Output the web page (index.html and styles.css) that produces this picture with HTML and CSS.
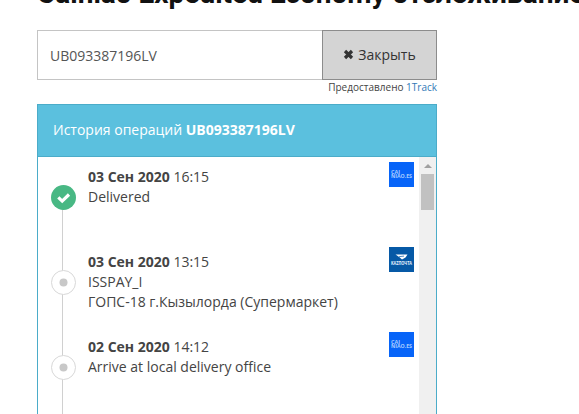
FILE: index.html
```html
<!DOCTYPE html>
<html lang="ru">
<head>
    <meta charset="UTF-8">
    <meta name="viewport" content="width=device-width, initial-scale=1.0">
    <title>Cainiao Expedited Economy отслеживание</title>
    <link rel="stylesheet" href="styles.css">
</head>
<body>
    <h1 class="title">Cainiao Expedited Economy отслеживание</h1>
    <div class="tracker">
        <div class="search">
            <input class="track-input" type="text" value="UB093387196LV">
            <button class="close-btn">
                <svg class="close-icon" width="11" height="11" viewBox="0 0 11 11">
                    <path d="M2 2l7 7M9 2l-7 7" stroke="#333" stroke-width="3.2"/>
                </svg>
                <span>Закрыть</span>
            </button>
        </div>
        <div class="provided">Предоставлено <a href="#">1Track</a></div>

        <div class="panel">
            <div class="panel-heading">История операций <b>UB093387196LV</b></div>
            <div class="panel-body">
                <ul class="timeline">
                    <li class="event">
                        <div class="rail rail-first">
                            <svg class="marker" width="27" height="27" viewBox="0 0 27 27">
                                <circle cx="13.5" cy="13.5" r="12.5" fill="#48b884"/>
                                <path d="M8.3 13.4l3.9 3.7 6.8-6.6" fill="none" stroke="#fff" stroke-width="3.2"/>
                            </svg>
                        </div>
                        <div class="event-text">
                            <p><b>03 Сен 2020</b> 16:15</p>
                            <p>Delivered</p>
                        </div>
                        <svg class="carrier" width="25" height="25" viewBox="0 0 25 25">
                            <rect width="25" height="25" fill="#0764f8"/>
                            <text class="carrier-text light" x="2" y="11.5" textLength="9" lengthAdjust="spacingAndGlyphs">CAI</text>
                            <text class="carrier-text light" x="2" y="16" textLength="21" lengthAdjust="spacingAndGlyphs">NIAO.ES</text>
                        </svg>
                    </li>
                    <li class="event">
                        <div class="rail">
                            <svg class="marker" width="27" height="27" viewBox="0 0 27 27">
                                <circle cx="13.5" cy="13.5" r="12" fill="#fff" stroke="#d8d8d8"/>
                                <circle cx="13.5" cy="13.5" r="4" fill="#c8c8c8"/>
                            </svg>
                        </div>
                        <div class="event-text">
                            <p><b>03 Сен 2020</b> 13:15</p>
                            <p>ISSPAY_I</p>
                            <p>ГОПС-18 г.Кызылорда (Супермаркет)</p>
                        </div>
                        <svg class="carrier" width="25" height="25" viewBox="0 0 25 25">
                            <rect width="25" height="25" fill="#0659a6"/>
                            <path d="M6.5 7.5h12l-2 3-3.5 2-2.5-2.3z" fill="#fff"/>
                            <path d="M10 9.7l5-.6" stroke="#0659a6" stroke-width=".7"/>
                            <text class="carrier-text" x="2" y="17.5" textLength="21" lengthAdjust="spacingAndGlyphs">KAZПОЧТА</text>
                        </svg>
                    </li>
                    <li class="event">
                        <div class="rail">
                            <svg class="marker" width="27" height="27" viewBox="0 0 27 27">
                                <circle cx="13.5" cy="13.5" r="12" fill="#fff" stroke="#d8d8d8"/>
                                <circle cx="13.5" cy="13.5" r="4" fill="#c8c8c8"/>
                            </svg>
                        </div>
                        <div class="event-text">
                            <p><b>02 Сен 2020</b> 14:12</p>
                            <p>Arrive at local delivery office</p>
                        </div>
                        <svg class="carrier" width="25" height="25" viewBox="0 0 25 25">
                            <rect width="25" height="25" fill="#0764f8"/>
                            <text class="carrier-text light" x="2" y="11.5" textLength="9" lengthAdjust="spacingAndGlyphs">CAI</text>
                            <text class="carrier-text light" x="2" y="16" textLength="21" lengthAdjust="spacingAndGlyphs">NIAO.ES</text>
                        </svg>
                    </li>
                </ul>
                <div class="scrollbar">
                    <div class="scroll-up"></div>
                    <div class="scroll-thumb"></div>
                </div>
            </div>
        </div>
    </div>
</body>
</html>
```

FILE: styles.css
```css
* {
    margin: 0;
    padding: 0;
    box-sizing: border-box;
}

body {
    height: 414px;
    overflow: hidden;
    background: #fff;
    color: #444;
    font-family: 'Open Sans', sans-serif;
    font-size: 14px;
    line-height: 20px;
}

.title {
    height: 30px;
    margin: -21px 0 21px 37px;
    color: #111;
    font-family: Roboto, sans-serif;
    font-size: 28px;
    font-weight: 700;
    line-height: 30px;
    white-space: nowrap;
}

.tracker {
    width: 400px;
    margin-left: 37px;
}

.search {
    display: flex;
    height: 50px;
}

.track-input {
    width: 285px;
    padding: 0 12px;
    border: 1px solid #c4c4c4;
    border-right: none;
    outline: none;
    color: #555;
    font-family: inherit;
    font-size: 14px;
}

.close-btn {
    display: flex;
    flex: 1;
    align-items: center;
    justify-content: center;
    gap: 4px;
    padding-bottom: 1px;
    border: 1px solid #8c8c8c;
    background: #d4d4d4;
    color: #333;
    font-family: inherit;
    font-size: 14px;
}

.provided {
    height: 24px;
    font-size: 10px;
    line-height: 15px;
    text-align: right;
}

.provided a {
    color: #337ab7;
    text-decoration: none;
}

.panel {
    height: 330px;
    border: 1px solid #4bacc9;
}

.panel-heading {
    height: 52px;
    padding: 15px;
    border-bottom: 1px solid #4bacc9;
    background: #5bc0de;
    color: #fff;
}

.panel-body {
    display: flex;
    height: 277px;
}

.timeline {
    flex: 1;
    padding-top: 5px;
    list-style: none;
}

.event {
    display: flex;
    height: 85px;
}

.rail {
    width: 50px;
    padding: 22px 0 0 12px;
    background: linear-gradient(#d0d0d0, #d0d0d0) 24px 0 / 1px 100% no-repeat;
}

.rail-first {
    background-position: 24px 35px;
}

.marker {
    display: block;
}

.event-text {
    flex: 1;
    padding-top: 5px;
    white-space: nowrap;
}

.carrier {
    margin-right: 5px;
}

.carrier-text {
    fill: #e8f2ff;
    font-family: 'Open Sans', sans-serif;
    font-size: 4.5px;
    font-weight: 700;
}

.light {
    fill: #a9ccff;
    font-size: 5px;
}

.scrollbar {
    width: 17px;
    padding: 7px 2px 0;
    background: #f0f0f0;
}

.scroll-up {
    width: 0;
    margin: 0 auto 6px;
    border: 4px solid transparent;
    border-top: none;
    border-bottom-color: #a0a0a0;
}

.scroll-thumb {
    height: 36px;
    background: #c1c1c1;
}
```
